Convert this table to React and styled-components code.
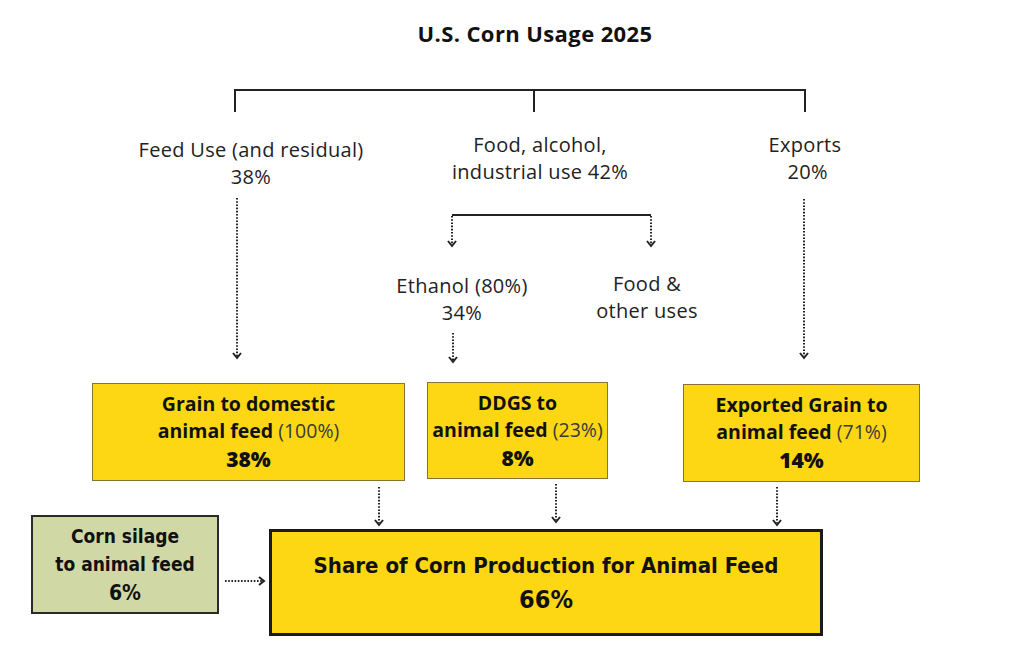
import React from 'react';
import styled, { createGlobalStyle } from 'styled-components';

const GlobalStyle = createGlobalStyle`
  html, body {
    margin: 0;
    padding: 0;
    background: #fff;
  }
  body {
    font-family: 'Open Sans', 'Liberation Sans', sans-serif;
    color: #1f1f1f;
  }
`;

const Canvas = styled.div`
  position: relative;
  width: 1024px;
  height: 663px;
  overflow: hidden;
  background: #fff;
`;

const Title = styled.h1`
  margin: 0;
  padding-top: 18px;
  padding-left: 46px;
  text-align: center;
  font-size: 22px;
  line-height: 30px;
  font-weight: 700;
  letter-spacing: 0.4px;
  color: #111;
`;

const Wires = styled.svg`
  position: absolute;
  left: 0;
  top: 0;
  width: 1024px;
  height: 663px;
  pointer-events: none;
`;

const Label = styled.div`
  position: absolute;
  transform: translateX(-50%);
  text-align: center;
  white-space: nowrap;
  font-size: 20px;
  line-height: 27px;
  letter-spacing: 0.3px;
  color: #222;
`;

const Box = styled.div`
  position: absolute;
  box-sizing: border-box;
  display: flex;
  flex-direction: column;
  align-items: center;
  justify-content: center;
  text-align: center;
  background: ${p => p.$fill || '#fdd714'};
  border: ${p => p.$border || '1.5px solid #857433'};
  color: #111;
`;

const BoxLine = styled.div`
  font-size: 19.5px;
  line-height: 27px;
  font-weight: 700;
  white-space: nowrap;
`;

const Share = styled.span`
  font-weight: 400;
  color: #3a3a3a;
`;

const BigPct = styled.div`
  font-size: 21px;
  line-height: 30px;
  font-weight: 800;
`;

const Condensed = styled.div`
  font-family: 'DejaVu Sans', sans-serif;
  font-stretch: condensed;
  font-weight: 700;
  white-space: nowrap;
  font-size: ${p => p.$size}px;
  line-height: ${p => p.$lh}px;
`;

const Arrow = ({ x1, y1, x2, y2 }) => {
  const horizontal = y1 === y2;
  const head = horizontal
    ? `M${x2 - 5},${y2 - 4} L${x2},${y2} L${x2 - 5},${y2 + 4}`
    : `M${x2 - 4},${y2 - 5} L${x2},${y2} L${x2 + 4},${y2 - 5}`;
  return (
    <g>
      <line
        x1={x1}
        y1={y1}
        x2={horizontal ? x2 - 2 : x2}
        y2={horizontal ? y2 : y2 - 2}
        stroke="#222"
        strokeWidth="2"
        strokeDasharray="1.6 1.6"
      />
      <path d={head} fill="none" stroke="#222" strokeWidth="2" />
    </g>
  );
};

export default function App() {
  return (
    <>
      <GlobalStyle />
      <Canvas>
        <Title>U.S. Corn Usage 2025</Title>

        <Wires viewBox="0 0 1024 663">
          <path
            d="M235,112 L235,90 L805,90 L805,112 M534,90 L534,112"
            fill="none"
            stroke="#222"
            strokeWidth="2"
          />
          <line x1="452" y1="215" x2="651" y2="215" stroke="#222" strokeWidth="2" />
          <Arrow x1={237} y1={198} x2={237} y2={358} />
          <Arrow x1={804} y1={199} x2={804} y2={358} />
          <Arrow x1={452} y1={216} x2={452} y2={246} />
          <Arrow x1={651} y1={216} x2={651} y2={246} />
          <Arrow x1={453} y1={333} x2={453} y2={362} />
          <Arrow x1={379} y1={487} x2={379} y2={525} />
          <Arrow x1={556} y1={484} x2={556} y2={522} />
          <Arrow x1={777} y1={487} x2={777} y2={525} />
          <Arrow x1={225} y1={581} x2={264} y2={581} />
        </Wires>

        <Label style={{ left: 251, top: 136 }}>
          Feed Use (and residual)
          <br />
          38%
        </Label>
        <Label style={{ left: 540, top: 131 }}>
          Food, alcohol,
          <br />
          industrial use 42%
        </Label>
        <Label style={{ left: 805, top: 131 }}>
          Exports
          <br />
          &nbsp;20%
        </Label>
        <Label style={{ left: 462, top: 272 }}>
          Ethanol (80%)
          <br />
          34%
        </Label>
        <Label style={{ left: 647, top: 270 }}>
          Food &amp;
          <br />
          other uses
        </Label>

        <Box style={{ left: 92, top: 383, width: 313, height: 98 }}>
          <BoxLine>Grain to domestic</BoxLine>
          <BoxLine>
            animal feed <Share>(100%)</Share>
          </BoxLine>
          <BigPct>38%</BigPct>
        </Box>
        <Box style={{ left: 427, top: 382, width: 181, height: 97 }}>
          <BoxLine>DDGS to</BoxLine>
          <BoxLine>
            animal feed <Share>(23%)</Share>
          </BoxLine>
          <BigPct>8%</BigPct>
        </Box>
        <Box style={{ left: 683, top: 384, width: 237, height: 98 }}>
          <BoxLine>Exported Grain to</BoxLine>
          <BoxLine>
            animal feed <Share>(71%)</Share>
          </BoxLine>
          <BigPct>14%</BigPct>
        </Box>

        <Box
          $fill="#d0d9a6"
          $border="2px solid #2a2a2a"
          style={{ left: 31, top: 515, width: 188, height: 99 }}
        >
          <Condensed $size={19} $lh={28}>Corn silage</Condensed>
          <Condensed $size={19} $lh={28}>to animal feed</Condensed>
          <Condensed $size={21} $lh={30}>6%</Condensed>
        </Box>

        <Box
          $border="3px solid #1a1a1a"
          style={{ left: 269, top: 529, width: 554, height: 107 }}
        >
          <Condensed $size={22} $lh={34}>Share of Corn Production for Animal Feed</Condensed>
          <Condensed $size={25} $lh={34}>66%</Condensed>
        </Box>
      </Canvas>
    </>
  );
}
